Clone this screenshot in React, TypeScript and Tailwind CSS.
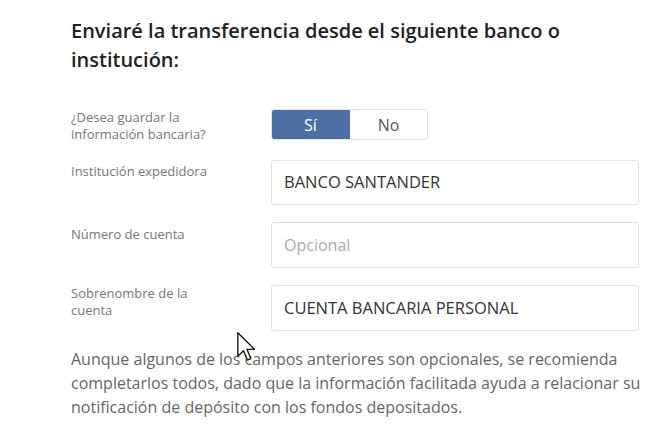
import React from "react";

const font = { fontFamily: '"Open Sans", "Liberation Sans", sans-serif' };

function Cursor() {
  return (
    <svg
      className="absolute left-[237px] top-[332px]"
      width="19"
      height="29"
      viewBox="0 0 12.6 19.4"
    >
      <path
        d="M0.5 0.5 L0.5 16.2 L4.3 12.6 L6.9 18.8 L9.2 17.8 L6.6 11.6 L11.6 11.6 Z"
        fill="#fff"
        stroke="#111"
        strokeWidth="0.9"
        strokeLinejoin="round"
      />
    </svg>
  );
}

export default function App() {
  return (
    <div className="relative w-[646px] h-[435px] bg-white overflow-hidden" style={font}>
      <div className="pl-[71px] pt-[16px] w-[646px]">
        <h2 className="text-[20px] leading-[29px] font-semibold text-[#222] w-[569px]">
          Enviaré la transferencia desde el siguiente banco o institución:
        </h2>

        <div className="mt-[35px] flex flex-col">
          <div className="flex">
            <div className="w-[200px] text-[13px] leading-[16.5px] text-[#777]">
              ¿Desea guardar la
              <br />
              información bancaria?
            </div>
            <div className="flex w-[157px] h-[31px] rounded-[3px] border border-[#e3e3e3] overflow-hidden text-[16px]">
              <div className="w-[79px] -ml-px -my-px h-[31px] bg-[#4d6fa3] text-white flex items-center justify-center rounded-l-[3px]">
                Sí
              </div>
              <div className="flex-1 flex items-center justify-center text-[#555]">No</div>
            </div>
          </div>

          <div className="flex mt-[18px]">
            <div className="w-[200px] pt-[3px] text-[13px] leading-[16px] text-[#777]">
              Institución expedidora
            </div>
            <div className="w-[368px] h-[45px] rounded-[3px] border border-[#e3e3e3] flex items-center px-[12px] text-[16.5px] text-[#333]">
              BANCO SANTANDER
            </div>
          </div>

          <div className="flex mt-[17px]">
            <div className="w-[200px] pt-[4px] text-[13px] leading-[16px] text-[#777]">
              Número de cuenta
            </div>
            <div className="w-[368px] h-[46px] rounded-[3px] border border-[#e3e3e3] flex items-center px-[12px] text-[16px] text-[#aaa]">
              Opcional
            </div>
          </div>

          <div className="flex mt-[17px]">
            <div className="w-[200px] text-[13px] leading-[16.5px] text-[#777]">
              Sobrenombre de la
              <br />
              cuenta
            </div>
            <div className="w-[368px] h-[46px] rounded-[3px] border border-[#e3e3e3] flex items-center px-[12px] text-[16.5px] text-[#333]">
              CUENTA BANCARIA PERSONAL
            </div>
          </div>
        </div>

        <p className="mt-[16px] w-[574px] text-[16px] leading-[24px] text-[#666]">
          Aunque algunos de los campos anteriores son opcionales, se recomienda completarlos todos,
          dado que la información facilitada ayuda a relacionar su notificación de depósito con los
          fondos depositados.
        </p>
      </div>
      <Cursor />
    </div>
  );
}
